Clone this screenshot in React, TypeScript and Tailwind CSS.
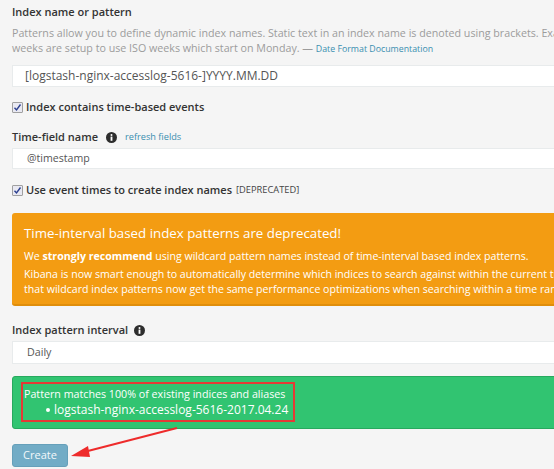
import React from "react";

const InfoIcon = () => (
  <svg width="11" height="11" viewBox="0 0 12 12" className="inline-block">
    <circle cx="6" cy="6" r="6" fill="#2d2d2d" />
    <circle cx="6" cy="3.2" r="1.1" fill="#fff" />
    <rect x="5" y="5" width="2" height="4.6" fill="#fff" />
  </svg>
);

const Checkbox = () => (
  <span className="inline-flex items-center justify-center w-[11px] h-[11px] border border-[#a0a0a0] bg-[#e9e9f2] rounded-[1px] mr-[3px]">
    <svg width="9" height="9" viewBox="0 0 9 9">
      <path d="M1.5 4.8 L3.5 7 L7.5 1.5" stroke="#2b3f8f" strokeWidth="1.4" fill="none" />
    </svg>
  </span>
);

export default function App() {
  return (
    <div className="relative w-[554px] h-[469px] overflow-hidden bg-[#f5f5f5] font-['Open_Sans',sans-serif] text-[12px]">
      <div className="w-[900px] pl-3 pt-[4px]">
        <div className="h-[16px] leading-[16px] text-[11px] font-semibold text-[#333]">Index name or pattern</div>
        <div className="mt-[6px] leading-[15px] text-[10.7px] text-[#9c9c9c] whitespace-nowrap">
          <div>
            Patterns allow you to define dynamic index names. Static text in an index name is denoted using brackets. Example: [logstash-]YYYY.MM.DD. Please note that
          </div>
          <div>
            weeks are setup to use ISO weeks which start on Monday. —{" "}
            <span className="text-[8.8px] text-[#3a8fb0]">Date Format Documentation</span>
          </div>
        </div>
        <div className="mt-[8px] h-[22px] bg-white border border-[#e8ebec] flex items-center pl-3 text-[#555]">
          [logstash-nginx-accesslog-5616-]YYYY.MM.DD
        </div>
        <div className="mt-[12px] h-[16px] flex items-center text-[11px] font-semibold text-[#333]">
          <Checkbox />
          Index contains time-based events
        </div>
        <div className="mt-[14px] h-[16px] flex items-center text-[11px] font-semibold text-[#333]">
          Time-field name
          <span className="ml-[8px] mr-[8px] flex items-center"><InfoIcon /></span>
          <span className="text-[9.2px] font-normal text-[#3a8fb0]">refresh fields</span>
        </div>
        <div className="mt-[3px] h-[21px] bg-white border border-[#e8ebec] flex items-center pl-[14px] text-[10.6px] text-[#555]">
          @timestamp
        </div>
        <div className="mt-[13px] h-[16px] flex items-center text-[11px] font-semibold text-[#333] whitespace-nowrap">
          <Checkbox />
          Use event times to create index names
          <span className="ml-[4px] text-[9.3px] font-normal text-[#444]">[DEPRECATED]</span>
        </div>
        <div className="mt-[15px] h-[93px] bg-[#f39c12] border-b-2 border-[#e08e0b] rounded-[3px] text-white px-3 pt-[10px] whitespace-nowrap">
          <div className="text-[13.3px] leading-[20px]">Time-interval based index patterns are deprecated!</div>
          <div className="mt-[5px] leading-[16px] text-[10.6px]">
            We <span className="font-bold">strongly recommend</span> using wildcard pattern names instead of time-interval based index patterns.
          </div>
          <div className="mt-[3px] leading-[15px] text-[10.6px]">
            <div>Kibana is now smart enough to automatically determine which indices to search against within the current time range for wildcard index patterns. This means</div>
            <div>that wildcard index patterns now get the same performance optimizations when searching within a time range as time-interval patterns.</div>
          </div>
        </div>
        <div className="mt-[16px] h-[16px] flex items-center text-[11px] font-semibold text-[#333]">
          Index pattern interval
          <span className="ml-[6px] flex items-center"><InfoIcon /></span>
        </div>
        <div className="mt-[3px] h-[23px] bg-white border border-[#e8ebec] flex items-center pl-[14px] text-[10.7px] text-[#555]">
          Daily
        </div>
        <div className="mt-[12px] h-[53px] bg-[#31c471] border border-[#27a95e] rounded-[3px] text-white px-[11px] pt-[10px] leading-[15px]">
          <div className="text-[10.7px]">Pattern matches 100% of existing indices and aliases</div>
          <ul className="pl-[22px]">
            <li className="flex items-center">
              <span className="w-[4px] h-[4px] rounded-full bg-white mr-[4px]" />
              logstash-nginx-accesslog-5616-2017.04.24
            </li>
          </ul>
        </div>
        <button className="mt-[15px] h-[23px] w-[56px] bg-[#72acc6] border border-[#66a0ba] rounded-[3px] text-[#f3f8fb] text-[11px] flex items-center justify-center">
          Create
        </button>
      </div>
      <div className="absolute left-[21px] top-[382px] w-[274px] h-[40px] border-2 border-[#e53935]" />
      <svg className="absolute left-0 top-0" width="554" height="469">
        <line x1="177" y1="428" x2="84" y2="452" stroke="#ee2b2b" strokeWidth="2" />
        <polygon points="71,456 88,446 90,457" fill="#ee2b2b" />
      </svg>
    </div>
  );
}
